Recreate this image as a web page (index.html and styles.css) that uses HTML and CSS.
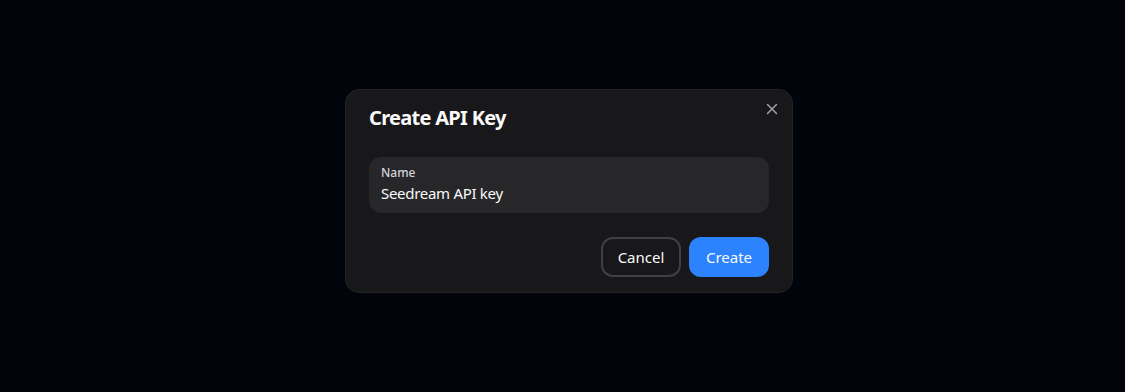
FILE: index.html
```html
<!DOCTYPE html>
<html lang="en">
<head>
<meta charset="utf-8">
<title>Create API Key</title>
<link rel="stylesheet" href="styles.css">
</head>
<body>
<div class="backdrop">
  <div class="modal" role="dialog" aria-labelledby="modal-title">
    <button class="close" aria-label="Close">
      <svg width="12" height="12" viewBox="0 0 12 12" fill="none" stroke="currentColor" stroke-width="1.5" stroke-linecap="round"><path d="M1.5 1.5l9 9M10.5 1.5l-9 9"/></svg>
    </button>
    <h2 class="title" id="modal-title">Create API Key</h2>
    <label class="field">
      <span class="field-label">Name</span>
      <input class="field-input" type="text" value="Seedream API key">
    </label>
    <div class="actions">
      <button class="btn btn-outline">Cancel</button>
      <button class="btn btn-primary">Create</button>
    </div>
  </div>
</div>
</body>
</html>
```
FILE: styles.css
```css
* { box-sizing: border-box; }
html, body { margin: 0; padding: 0; }
body {
  background: #01040b;
  font-family: "Noto Sans", "Open Sans", sans-serif;
  color: #fafafa;
  height: 392px;
}
.backdrop {
  height: 100%;
  display: flex;
  justify-content: center;
  padding-top: 89px;
  padding-left: 13px;
}
.modal {
  position: relative;
  width: 448px;
  height: 204px;
  background: #18181b;
  border: 1px solid #222226;
  border-radius: 14px;
  padding: 14px 23px 15px;
  display: flex;
  flex-direction: column;
}
.close {
  position: absolute;
  top: 13px;
  right: 14px;
  width: 12px;
  height: 12px;
  padding: 0;
  border: 0;
  background: none;
  color: #a1a1aa;
  display: flex;
}
.title {
  margin: 0;
  font-size: 20px;
  font-weight: 700;
  line-height: 28px;
  letter-spacing: -0.7px;
}
.field {
  margin-top: 25px;
  height: 56px;
  background: #27272a;
  border-radius: 12px;
  padding: 8px 12px;
  display: flex;
  flex-direction: column;
}
.field-label {
  font-size: 12px;
  line-height: 16px;
  font-weight: 500;
  color: #d4d4d8;
}
.field-input {
  margin: 0;
  padding: 0;
  border: 0;
  background: transparent;
  color: #fafafa;
  font-family: inherit;
  font-size: 15px;
  letter-spacing: -0.3px;
  line-height: 24px;
  outline: none;
}
.actions {
  margin-top: auto;
  display: flex;
  justify-content: flex-end;
  gap: 8px;
}
.btn {
  width: 80px;
  height: 40px;
  border-radius: 12px;
  font-family: inherit;
  font-size: 15px;
  color: #fafafa;
  cursor: pointer;
}
.btn-outline {
  background: transparent;
  border: 2px solid #3f3f46;
}
.btn-primary {
  background: #2d83ff;
  border: 0;
}
```
